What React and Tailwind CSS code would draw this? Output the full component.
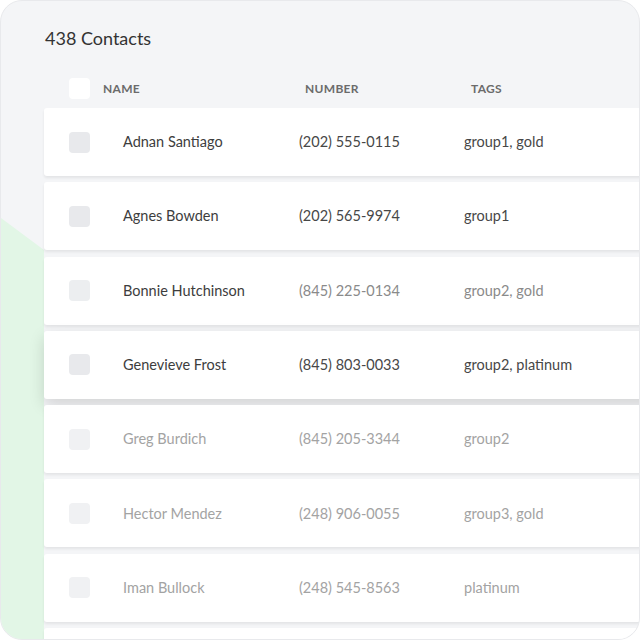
import React from 'react';

const CONTACTS = [
  { name: 'Adnan Santiago', number: '(202) 555-0115', tags: 'group1, gold', tone: 'dark' },
  { name: 'Agnes Bowden', number: '(202) 565-9974', tags: 'group1', tone: 'dark' },
  { name: 'Bonnie Hutchinson', number: '(845) 225-0134', tags: 'group2, gold', tone: 'mixed' },
  { name: 'Genevieve Frost', number: '(845) 803-0033', tags: 'group2, platinum', tone: 'dark', lifted: true },
  { name: 'Greg Burdich', number: '(845) 205-3344', tags: 'group2', tone: 'faded' },
  { name: 'Hector Mendez', number: '(248) 906-0055', tags: 'group3, gold', tone: 'faded' },
  { name: 'Iman Bullock', number: '(248) 545-8563', tags: 'platinum', tone: 'faded' },
  { name: '', number: '', tags: '', tone: 'faded' },
];

const TONES = {
  dark:  { name: 'text-[#3d3d3d]', rest: 'text-[#474747]', box: 'bg-[#e8e9ec]' },
  mixed: { name: 'text-[#3d3d3d]', rest: 'text-[#8a8a8a]', box: 'bg-[#eceef0]' },
  faded: { name: 'text-[#a3a3a3]', rest: 'text-[#a3a3a3]', box: 'bg-[#f0f1f3]' },
};

export default function App() {
  return (
    <div className="w-[640px] h-[640px] bg-white overflow-hidden font-['Lato','Open_Sans',sans-serif]">
      <div className="w-full h-full rounded-[22px] bg-[#f4f5f7] border border-[#e8e9ec] overflow-hidden flex">
        {/* green decoration in the left gutter */}
        <div className="w-[43px] shrink-0">
          <svg width="43" height="640" viewBox="0 0 43 640" className="block">
            <polygon points="0,217 43,249 43,640 0,640" fill="#e2f6e6" />
          </svg>
        </div>

        <div className="flex-1 min-w-0">
          <h1 className="mt-[25px] h-[24px] leading-[24px] text-[18px] text-[#333] pl-[1px]">438 Contacts</h1>

          <div className="mt-[27px] h-[23px] flex items-center pl-[25px] text-[12px] font-bold tracking-[0.3px] text-[#6b6b6b]">
            <div className="w-[21px] h-[21px] rounded-[4px] bg-white shrink-0" />
            <div className="ml-[13px] w-[202px]">NAME</div>
            <div className="w-[166px]">NUMBER</div>
            <div>TAGS</div>
          </div>

          <div className="mt-[8px] flex flex-col gap-[6.3px] w-[620px]">
            {CONTACTS.map((c, i) => {
              const t = TONES[c.tone];
              return (
                <div
                  key={i}
                  className={
                    'h-[68px] bg-white rounded-[3px] flex items-center pl-[25px] text-[14.5px] ' +
                    (c.lifted
                      ? 'shadow-[0_6px_16px_rgba(0,0,0,0.14)]'
                      : 'shadow-[0_2px_3px_rgba(0,0,0,0.07)]')
                  }
                >
                  <div className={'w-[21px] h-[21px] rounded-[4px] shrink-0 ' + t.box} />
                  <div className={'ml-[33px] w-[176px] ' + t.name}>{c.name}</div>
                  <div className={'w-[165px] ' + t.rest}>{c.number}</div>
                  <div className={t.rest}>{c.tags}</div>
                </div>
              );
            })}
          </div>
        </div>
      </div>
    </div>
  );
}
